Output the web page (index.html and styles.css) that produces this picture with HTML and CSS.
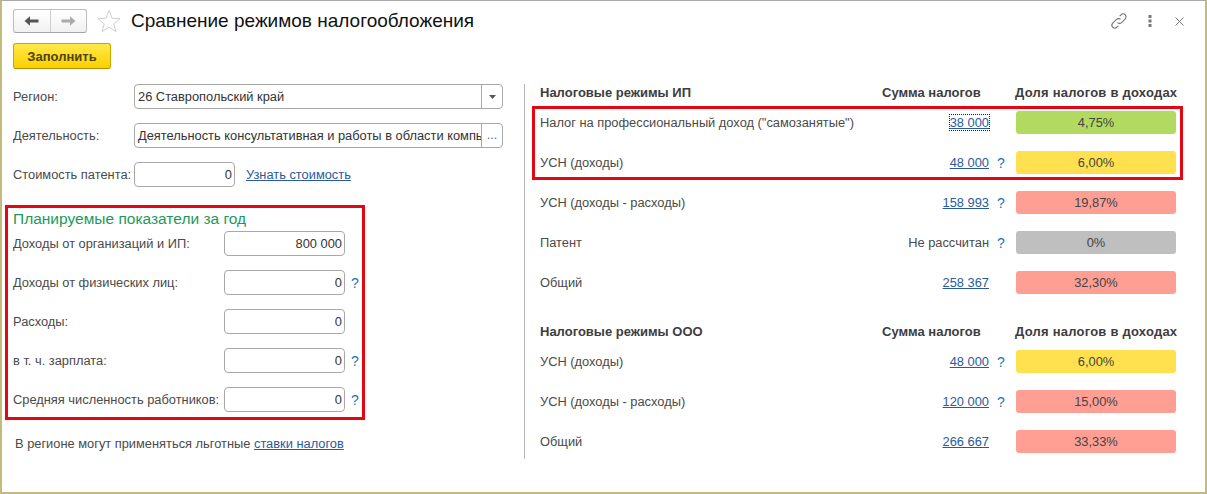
FILE: index.html
```html
<!DOCTYPE html>
<html lang="ru">
<head>
<meta charset="utf-8">
<title>Сравнение режимов налогообложения</title>
<link rel="stylesheet" href="styles.css">
</head>
<body>
<div class="window">
  <header class="titlebar">
    <div class="nav">
      <span class="nav-btn">
        <svg width="16" height="12" viewBox="0 0 16 12"><path d="M0.5 6 6 1.2V4.6H14.5V7.4H6V10.8Z" fill="#555"/></svg>
      </span>
      <span class="nav-btn">
        <svg width="16" height="12" viewBox="0 0 16 12"><path d="M15.5 6 10 1.2V4.6H1.5V7.4H10V10.8Z" fill="#aaa"/></svg>
      </span>
    </div>
    <svg class="star" width="24" height="24" viewBox="0 0 24 24"><path d="M12 1.5 15 9.2 23 9.7 16.8 14.8 18.9 22.6 12 18.2 5.1 22.6 7.2 14.8 1 9.7 9 9.2Z" fill="#fff" stroke="#cfcfcf"/></svg>
    <h1 class="title">Сравнение режимов налогообложения</h1>
    <div class="actions">
      <svg width="20" height="20" viewBox="0 0 18 18" fill="none" stroke="#777" stroke-width="1"><path d="M7.6 10.4a2.6 2.6 0 0 0 3.7 0l3.3-3.3a2.6 2.6 0 0 0-3.7-3.7L9.6 4.7"/><path d="M10.4 7.6a2.6 2.6 0 0 0-3.7 0l-3.3 3.3a2.6 2.6 0 0 0 3.7 3.7l1.3-1.3"/></svg>
      <svg class="more" width="4" height="14" viewBox="0 0 4 14" fill="#777"><rect x="0.5" y="1" width="3" height="3"/><rect x="0.5" y="5.5" width="3" height="3"/><rect x="0.5" y="10" width="3" height="3"/></svg>
      <svg width="11" height="11" viewBox="0 0 11 11" stroke="#777" stroke-width="1"><path d="M1.5 1.5 9.5 9.5M9.5 1.5 1.5 9.5"/></svg>
    </div>
  </header>
  <button class="fill-btn">Заполнить</button>
  <main class="columns">
    <section class="left">
      <div class="fields">
        <div class="field"><label class="label">Регион:</label>
          <div class="input wide"><span class="value">26 Ставропольский край</span><span class="input-btn"><svg width="7" height="4" viewBox="0 0 7 4"><path d="M0 0H7L3.5 4Z" fill="#555"/></svg></span></div></div>
        <div class="field"><label class="label">Деятельность:</label>
          <div class="input wide"><span class="value">Деятельность консультативная и работы в области компь</span><span class="input-btn dots">...</span></div></div>
        <div class="field"><label class="label">Стоимость патента:</label>
          <div class="input patent"><span class="value num">0</span></div><a class="link know" href="#">Узнать стоимость</a></div>
      </div>
      <div class="plan">
        <div class="plan-title">Планируемые показатели за год</div>
        <div class="plan-rows">
          <div class="field"><label class="label plan-label">Доходы от организаций и ИП:</label><div class="input money"><span class="value num">800 000</span></div></div>
          <div class="field"><label class="label plan-label">Доходы от физических лиц:</label><div class="input money"><span class="value num">0</span></div><span class="help">?</span></div>
          <div class="field"><label class="label plan-label">Расходы:</label><div class="input money"><span class="value num">0</span></div></div>
          <div class="field"><label class="label plan-label">в т. ч. зарплата:</label><div class="input money"><span class="value num">0</span></div><span class="help">?</span></div>
          <div class="field"><label class="label plan-label">Средняя численность работников:</label><div class="input money"><span class="value num">0</span></div><span class="help">?</span></div>
        </div>
      </div>
      <p class="note">В регионе могут применяться льготные <a class="link" href="#">ставки налогов</a></p>
    </section>
    <section class="right">
      <div class="thead"><span class="th-name">Налоговые режимы ИП</span><span class="th-sum">Сумма налогов</span><span class="th-share">Доля налогов в доходах</span></div>
      <div class="highlight">
        <div class="row"><span class="name">Налог на профессиональный доход ("самозанятые")</span><a class="link amount focus" href="#">38 000</a><span class="qh"></span><span class="bar green">4,75%</span></div>
        <div class="row"><span class="name">УСН (доходы)</span><a class="link amount" href="#">48 000</a><span class="qh">?</span><span class="bar yellow">6,00%</span></div>
      </div>
      <div class="rows after-box">
        <div class="row"><span class="name">УСН (доходы - расходы)</span><a class="link amount" href="#">158 993</a><span class="qh">?</span><span class="bar red">19,87%</span></div>
        <div class="row"><span class="name">Патент</span><span class="amount plain">Не рассчитан</span><span class="qh">?</span><span class="bar grey">0%</span></div>
        <div class="row"><span class="name">Общий</span><a class="link amount" href="#">258 367</a><span class="qh"></span><span class="bar red">32,30%</span></div>
      </div>
      <div class="thead second"><span class="th-name">Налоговые режимы ООО</span><span class="th-sum">Сумма налогов</span><span class="th-share">Доля налогов в доходах</span></div>
      <div class="rows after-head">
        <div class="row"><span class="name">УСН (доходы)</span><a class="link amount" href="#">48 000</a><span class="qh">?</span><span class="bar yellow">6,00%</span></div>
        <div class="row"><span class="name">УСН (доходы - расходы)</span><a class="link amount" href="#">120 000</a><span class="qh">?</span><span class="bar red">15,00%</span></div>
        <div class="row"><span class="name">Общий</span><a class="link amount" href="#">266 667</a><span class="qh"></span><span class="bar red">33,33%</span></div>
      </div>
    </section>
  </main>
</div>
</body>
</html>
```
FILE: styles.css
```css
* { box-sizing: border-box; }
html, body { margin: 0; padding: 0; background: #fff; }
body { font-family: "Liberation Sans", Arial, sans-serif; font-size: 12.85px; color: #4a4a4a; }

.window {
  width: 1207px;
  height: 494px;
  overflow: hidden;
  padding: 8px 0 0 11px;
  border-top: 1px solid #a9a9a9;
  border-left: 2px solid #c2bb7c;
  border-bottom: 2px solid #c2bb7c;
  border-right: 2px solid #c2bb7c;
  background: #fff;
}

.titlebar { display: flex; align-items: center; height: 24px; }
.nav {
  display: flex;
  width: 74px;
  height: 24px;
  border: 1px solid #bdbdbd;
  border-bottom-color: #a5a5a5;
  border-radius: 3px;
  background: linear-gradient(#fff, #f1f1f1);
}
.nav-btn { flex: 1; display: flex; align-items: center; justify-content: center; }
.nav-btn + .nav-btn { border-left: 1px solid #cfcfcf; }
.star { margin-left: 10px; }
.title { margin: 0 0 0 10px; font-size: 19px; font-weight: 400; color: #111; white-space: nowrap; }
.actions { margin-left: auto; margin-right: 20px; display: flex; align-items: center; gap: 19px; }
.more { margin-right: 3px; }

.fill-btn {
  display: block;
  margin: 10px 0 0;
  padding: 0;
  width: 98px;
  height: 26px;
  font: bold 13px "Liberation Sans", Arial, sans-serif;
  color: #4f4310;
  border: 1px solid #c9a500;
  border-bottom-color: #b08f00;
  border-radius: 3px;
  background: linear-gradient(#ffe94a, #fbd000);
}

.columns { display: flex; margin-top: 15px; }
.left { width: 511px; flex: none; }
.fields { display: flex; flex-direction: column; gap: 14px; }
.field { display: flex; align-items: center; }
.label { width: 121px; flex: none; white-space: nowrap; }
.input {
  display: flex;
  align-items: center;
  height: 25px;
  border: 1px solid #a8a8a8;
  border-radius: 4px;
  background: #fff;
  color: #333;
  overflow: hidden;
}
.wide { width: 369px; }
.patent { width: 101px; }
.money { width: 121px; }
.value { flex: 1; min-width: 0; padding: 0 0 0 3px; white-space: nowrap; overflow: hidden; }
.num { text-align: right; padding-right: 2px; }
.input-btn {
  flex: none;
  width: 21px;
  height: 100%;
  display: flex;
  align-items: center;
  justify-content: center;
  border-left: 1px solid #a8a8a8;
}
.dots { padding-bottom: 2px; color: #666; }
.link { color: #2a5a9e; text-decoration: underline; }
.know { margin-left: 11px; }

.plan {
  width: 360px;
  margin: 18px 0 0 -8px;
  padding: 0 0 5px 5px;
  border: 3px solid #e30613;
}
.plan-title { height: 23px; line-height: 22px; font-size: 15.5px; color: #1d9a5b; white-space: nowrap; }
.plan-rows { display: flex; flex-direction: column; gap: 14px; }
.plan-label { width: 211px; }
.help { margin-left: 6px; font-size: 14px; color: #1d74b5; }
.note { margin: 15px 0 0 2px; height: 18px; line-height: 18px; color: #4a4a4a; }

.right {
  width: 660px;
  height: 375px;
  flex: none;
  padding-left: 15px;
  border-left: 1px solid #b5b5b5;
}
.thead { display: flex; align-items: center; width: 637px; height: 18px; padding-bottom: 2px; font-size: 13px; font-weight: bold; color: #3d3d3d; white-space: nowrap; }
.th-name { flex: 1; }
.th-sum { width: 99px; margin-right: 34px; }
.th-share { width: 162px; letter-spacing: .23px; }
.second { margin-top: 29px; }

.highlight {
  display: flex;
  flex-direction: column;
  gap: 17px;
  width: 651px;
  margin: 4px 0 0 -8px;
  padding: 2px 4px 3px 5px;
  border: 3px solid #e30613;
}
.rows { display: flex; flex-direction: column; gap: 17px; width: 636px; }
.after-box { margin-top: 11px; }
.after-head { margin-top: 9px; }
.row { display: flex; align-items: center; height: 23px; }
.name { flex: 1; white-space: nowrap; }
.amount { white-space: nowrap; }
.plain { color: #4a4a4a; }
.focus { outline: 1px dotted #222; outline-offset: 0; }
.qh { width: 27px; padding-left: 8px; flex: none; font-size: 14px; color: #1d74b5; }
.bar {
  flex: none;
  width: 160px;
  height: 23px;
  line-height: 23px;
  text-align: center;
  border-radius: 3px;
  color: #444;
}
.green { background: #b3da60; }
.yellow { background: #ffe14f; }
.red { background: #ff9f94; }
.grey { background: #bfbfbf; }
```
